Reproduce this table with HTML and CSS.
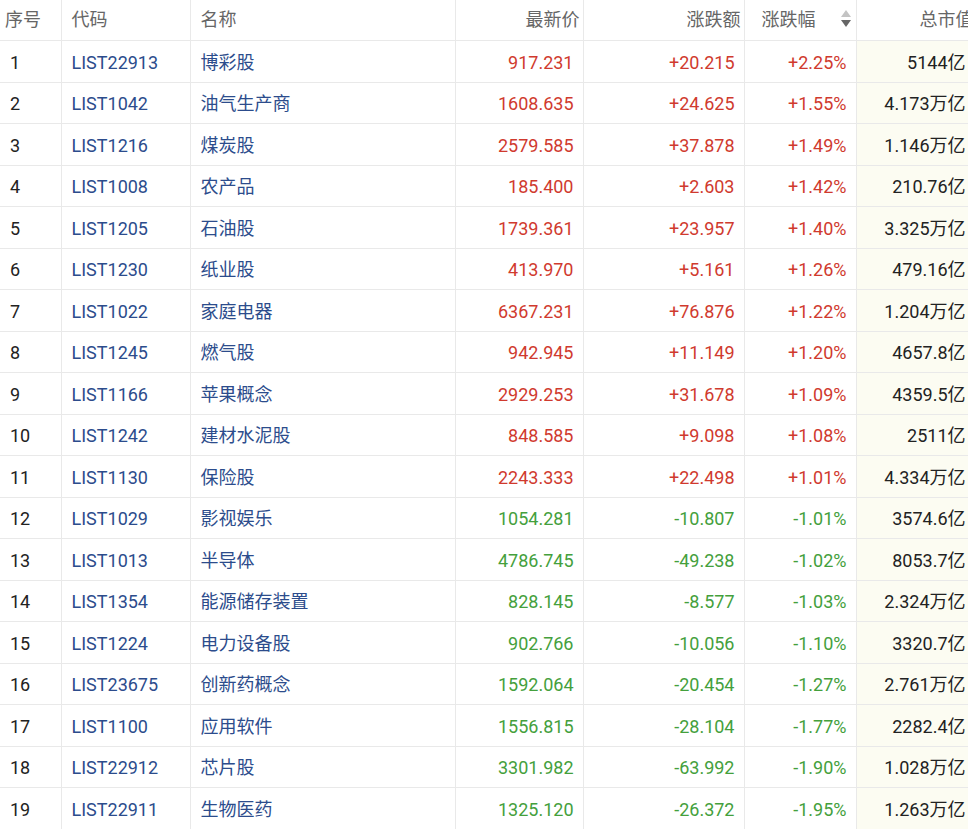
FILE: index.html
```html
<!DOCTYPE html>
<html lang="zh">
<head>
<meta charset="utf-8">
<title>板块行情</title>
<link rel="stylesheet" href="styles.css">
</head>
<body>
<table class="quotes">
  <colgroup>
    <col class="c-idx"><col class="c-code"><col class="c-name"><col class="c-price"><col class="c-chg"><col class="c-pct"><col class="c-cap">
  </colgroup>
  <thead>
    <tr>
      <th class="h-idx">序号</th>
      <th class="h-left">代码</th>
      <th class="h-left">名称</th>
      <th class="h-right">最新价</th>
      <th class="h-right">涨跌额</th>
      <th class="h-sort"><span class="sort-wrap"><span>涨跌幅</span><span class="arrows"><span class="up"></span><span class="down"></span></span></span></th>
      <th class="h-right h-cap">总市值</th>
    </tr>
  </thead>
  <tbody>
    <tr><td class="idx">1</td><td class="code">LIST22913</td><td class="name">博彩股</td><td class="num up-c">917.231</td><td class="num up-c">+20.215</td><td class="num up-c">+2.25%</td><td class="cap">5144亿</td></tr>
    <tr><td class="idx">2</td><td class="code">LIST1042</td><td class="name">油气生产商</td><td class="num up-c">1608.635</td><td class="num up-c">+24.625</td><td class="num up-c">+1.55%</td><td class="cap">4.173万亿</td></tr>
    <tr><td class="idx">3</td><td class="code">LIST1216</td><td class="name">煤炭股</td><td class="num up-c">2579.585</td><td class="num up-c">+37.878</td><td class="num up-c">+1.49%</td><td class="cap">1.146万亿</td></tr>
    <tr><td class="idx">4</td><td class="code">LIST1008</td><td class="name">农产品</td><td class="num up-c">185.400</td><td class="num up-c">+2.603</td><td class="num up-c">+1.42%</td><td class="cap">210.76亿</td></tr>
    <tr><td class="idx">5</td><td class="code">LIST1205</td><td class="name">石油股</td><td class="num up-c">1739.361</td><td class="num up-c">+23.957</td><td class="num up-c">+1.40%</td><td class="cap">3.325万亿</td></tr>
    <tr><td class="idx">6</td><td class="code">LIST1230</td><td class="name">纸业股</td><td class="num up-c">413.970</td><td class="num up-c">+5.161</td><td class="num up-c">+1.26%</td><td class="cap">479.16亿</td></tr>
    <tr><td class="idx">7</td><td class="code">LIST1022</td><td class="name">家庭电器</td><td class="num up-c">6367.231</td><td class="num up-c">+76.876</td><td class="num up-c">+1.22%</td><td class="cap">1.204万亿</td></tr>
    <tr><td class="idx">8</td><td class="code">LIST1245</td><td class="name">燃气股</td><td class="num up-c">942.945</td><td class="num up-c">+11.149</td><td class="num up-c">+1.20%</td><td class="cap">4657.8亿</td></tr>
    <tr><td class="idx">9</td><td class="code">LIST1166</td><td class="name">苹果概念</td><td class="num up-c">2929.253</td><td class="num up-c">+31.678</td><td class="num up-c">+1.09%</td><td class="cap">4359.5亿</td></tr>
    <tr><td class="idx">10</td><td class="code">LIST1242</td><td class="name">建材水泥股</td><td class="num up-c">848.585</td><td class="num up-c">+9.098</td><td class="num up-c">+1.08%</td><td class="cap">2511亿</td></tr>
    <tr><td class="idx">11</td><td class="code">LIST1130</td><td class="name">保险股</td><td class="num up-c">2243.333</td><td class="num up-c">+22.498</td><td class="num up-c">+1.01%</td><td class="cap">4.334万亿</td></tr>
    <tr><td class="idx">12</td><td class="code">LIST1029</td><td class="name">影视娱乐</td><td class="num dn-c">1054.281</td><td class="num dn-c">-10.807</td><td class="num dn-c">-1.01%</td><td class="cap">3574.6亿</td></tr>
    <tr><td class="idx">13</td><td class="code">LIST1013</td><td class="name">半导体</td><td class="num dn-c">4786.745</td><td class="num dn-c">-49.238</td><td class="num dn-c">-1.02%</td><td class="cap">8053.7亿</td></tr>
    <tr><td class="idx">14</td><td class="code">LIST1354</td><td class="name">能源储存装置</td><td class="num dn-c">828.145</td><td class="num dn-c">-8.577</td><td class="num dn-c">-1.03%</td><td class="cap">2.324万亿</td></tr>
    <tr><td class="idx">15</td><td class="code">LIST1224</td><td class="name">电力设备股</td><td class="num dn-c">902.766</td><td class="num dn-c">-10.056</td><td class="num dn-c">-1.10%</td><td class="cap">3320.7亿</td></tr>
    <tr><td class="idx">16</td><td class="code">LIST23675</td><td class="name">创新药概念</td><td class="num dn-c">1592.064</td><td class="num dn-c">-20.454</td><td class="num dn-c">-1.27%</td><td class="cap">2.761万亿</td></tr>
    <tr><td class="idx">17</td><td class="code">LIST1100</td><td class="name">应用软件</td><td class="num dn-c">1556.815</td><td class="num dn-c">-28.104</td><td class="num dn-c">-1.77%</td><td class="cap">2282.4亿</td></tr>
    <tr><td class="idx">18</td><td class="code">LIST22912</td><td class="name">芯片股</td><td class="num dn-c">3301.982</td><td class="num dn-c">-63.992</td><td class="num dn-c">-1.90%</td><td class="cap">1.028万亿</td></tr>
    <tr><td class="idx">19</td><td class="code">LIST22911</td><td class="name">生物医药</td><td class="num dn-c">1325.120</td><td class="num dn-c">-26.372</td><td class="num dn-c">-1.95%</td><td class="cap">1.263万亿</td></tr>
  </tbody>
</table>
</body>
</html>
```
FILE: styles.css
```css
html, body {
  margin: 0;
  padding: 0;
  background: #ffffff;
  overflow: hidden;
}

body {
  font-family: Roboto, "Noto Sans CJK SC", sans-serif;
  font-size: 18px;
  color: #222222;
}

.quotes {
  border-collapse: collapse;
  table-layout: fixed;
  width: 974px;
}

.c-idx { width: 61px; }
.c-code { width: 129px; }
.c-name { width: 265px; }
.c-price { width: 128px; }
.c-chg { width: 161px; }
.c-pct { width: 112px; }
.c-cap { width: 118px; }

.quotes th,
.quotes td {
  border: 1px solid #e9e9e9;
  white-space: nowrap;
  overflow: hidden;
}

.quotes tr > :first-child { border-left: none; }
.quotes thead th { border-top: none; }

.quotes th {
  height: 36px;
  padding: 0 0 4px 0;
  font-weight: normal;
  color: #666666;
  font-family: "Noto Sans CJK SC", sans-serif;
  font-size: 18px;
  line-height: 1;
  vertical-align: middle;
}

.quotes td {
  height: 37.5px;
  padding: 3px 0 0 0;
  vertical-align: middle;
  line-height: 1;
  font-weight: normal;
}

.h-idx { text-align: left; padding-left: 5px !important; }
.h-left { text-align: left; padding-left: 10px !important; }
.h-right { text-align: right; padding-right: 3px !important; }
.h-cap { padding-right: 0 !important; }

.h-sort { text-align: left; padding-left: 17px !important; }
.sort-wrap { display: flex; align-items: center; }
.arrows {
  display: flex;
  flex-direction: column;
  gap: 3px;
  margin-left: 25px;
}
.arrows .up {
  width: 0; height: 0;
  border-left: 5px solid transparent;
  border-right: 5px solid transparent;
  border-bottom: 7px solid #c4c4c4;
}
.arrows .down {
  width: 0; height: 0;
  border-left: 5px solid transparent;
  border-right: 5px solid transparent;
  border-top: 7px solid #666666;
}

.idx { padding-left: 10px !important; color: #222222; }
.code { padding-left: 10px !important; color: #2c4c8c; }
.name {
  padding-left: 10px !important;
  padding-top: 1px !important;
  padding-bottom: 2px !important;
  height: 37.5px;
  color: #2c4c8c;
  font-family: "Noto Sans CJK SC", sans-serif;
}
.num { text-align: right; padding-right: 9px !important; }
.cap { text-align: right; padding-right: 8px !important; background: #fcfcf2; color: #222222; }

.up-c { color: #d03a2e; }
.dn-c { color: #44a03c; }
```
